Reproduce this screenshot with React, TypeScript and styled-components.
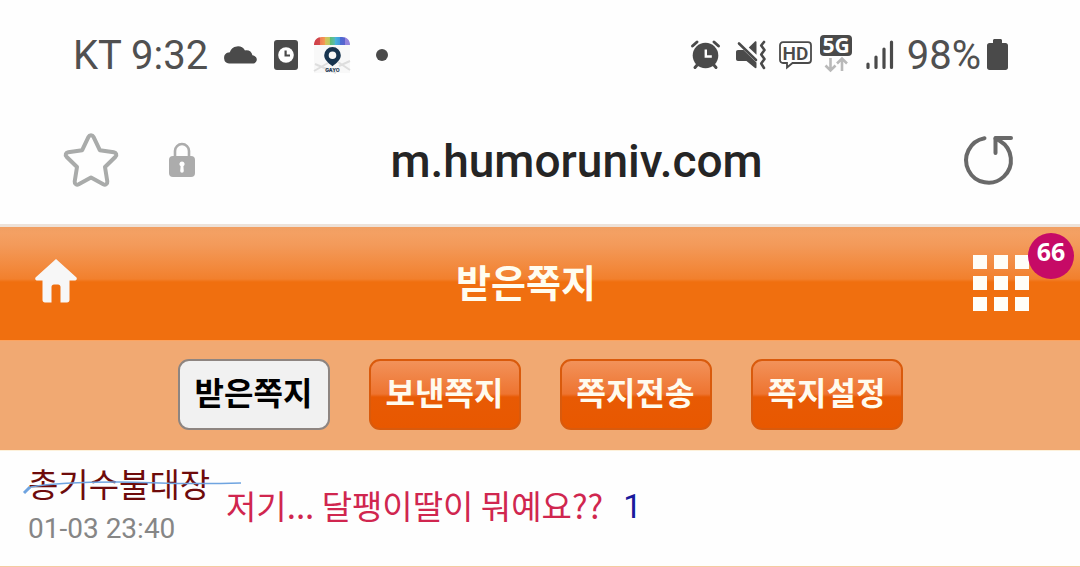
import React from "react";
import styled, { createGlobalStyle } from "styled-components";

const latin = `Roboto, "Noto Sans CJK KR", sans-serif`;
const korean = `"Noto Sans CJK KR", Roboto, sans-serif`;
const ink = "#4a4a4a";

const GlobalStyle = createGlobalStyle`
  *, *::before, *::after { box-sizing: border-box; }
  body { margin: 0; background: #fefefe; font-family: ${latin}; }
  button { padding: 0; border: 0; background: none; font: inherit; cursor: pointer; }
  svg { display: block; flex: none; overflow: visible; }
`;

const StatusBar = styled.div`
  display: flex;
  justify-content: space-between;
  align-items: center;
  height: 110px;
  padding: 0 72px 0 73px;
  color: #505050;
`;

const StatusGroup = styled.div<{ $gap: number }>`
  display: flex;
  align-items: center;
  gap: ${(p) => p.$gap}px;
`;

const StatusText = styled.span`
  padding-top: 1px;
  font-size: 40px;
  font-weight: 400;
  line-height: 48px;
  white-space: nowrap;
`;

const AddressBar = styled.form`
  display: flex;
  align-items: center;
  gap: 16px;
  height: 117px;
  padding: 0 66px 14px 64px;
  border-bottom: 3px solid #ede2d9;
`;

const IconButton = styled.button<{ $width: number; $align?: string }>`
  display: flex;
  flex: none;
  justify-content: ${(p) => p.$align || "flex-start"};
  width: ${(p) => p.$width}px;
`;

const AddressInput = styled.input`
  flex: 1;
  min-width: 0;
  padding: 2px 0 0;
  border: 0;
  outline: 0;
  background: transparent;
  color: #252525;
  font: 500 46px/56px ${latin};
  text-align: center;
`;

const PageHeader = styled.header`
  display: grid;
  grid-template-columns: 1fr auto 1fr;
  align-items: center;
  height: 113px;
  padding: 0 51px 2px 35px;
  background: linear-gradient(#f19f62 0, #f4a063 6px, #f39a5a 18px, #f2802d 52px, #f06f0f 55px);
`;

const PageTitle = styled.h1`
  margin: 0;
  padding: 0 12px 4px 0;
  color: #fffdf0;
  font: 700 38px/56px ${korean};
`;

const HomeLink = styled.a`
  justify-self: start;
  padding-bottom: 4px;
`;

const MenuButton = styled.button`
  position: relative;
  justify-self: end;
`;

const Badge = styled.span`
  position: absolute;
  top: -22px;
  right: -45px;
  width: 46px;
  height: 46px;
  border-radius: 50%;
  background: #c60a66;
  color: #fff;
  font: 700 25px/36px "Noto Sans", sans-serif;
  text-align: center;
`;

const Tabs = styled.nav`
  display: flex;
  justify-content: center;
  align-items: center;
  gap: 39px;
  height: 110px;
  padding-bottom: 2px;
  border-top: 1px solid #fda35e;
  background: #f1a972;
`;

const Tab = styled.button<{ $active?: boolean }>`
  && {
    width: 152px;
    height: 71px;
    padding-bottom: 8px;
    border: 2px solid ${(p) => (p.$active ? "#8e8581" : "#d95a0c")};
    border-radius: 11px;
    background: ${(p) =>
      p.$active
        ? "#f1f1f1"
        : "linear-gradient(#f2925a 0, #ee7430 33px, #e85a04 36px, #e85800 100%)"};
    color: ${(p) => (p.$active ? "#000" : "#fffbee")};
    font: 700 32px/48px ${korean};
    white-space: nowrap;
  }
`;

const MessageList = styled.ul`
  margin: 0;
  padding: 0;
  list-style: none;
`;

const MessageRow = styled.li`
  display: grid;
  grid-template-columns: 198px 1fr;
  align-items: center;
  height: 117px;
  padding: 0 0 8px 28px;
  border-top: 1px solid #fdf1da;
  border-bottom: 1px solid #f5cba0;
`;

const Sender = styled.div`
  position: relative;
  white-space: nowrap;
`;

const SenderName = styled.div`
  color: #6e0b0b;
  font: 400 33px/48px ${korean};
`;

const Sent = styled.time`
  display: block;
  color: #868686;
  font-size: 28px;
  line-height: 44px;
`;

const Stroke = styled.svg`
  position: absolute;
  top: 19px;
  left: -5px;
`;

const Subject = styled.div`
  display: flex;
  align-items: center;
  gap: 20px;
  color: #d0264f;
  font: 400 33px/48px ${korean};
`;

const SubjectLink = styled.a`
  color: inherit;
  text-decoration: none;
`;

const ReplyCount = styled.span`
  padding-top: 4px;
  color: #1a1a9c;
  font-family: ${latin};
`;

const CloudIcon = () => (
  <svg width="34" height="20" viewBox="0 0 34 20" fill={ink} aria-hidden="true">
    <path d="M5 18.500a5.600 5.600 0 0 1-1-10.900C5 7.400 5.400 7.400 5.800 7.200A8.400 8.400 0 0 1 21 5.400c3.800-.8 6.800 1.300 7.400 4.800 2.600.5 4.400 2 4.400 4.300s-1.800 4-4.300 4Z" />
  </svg>
);

const ClockCardIcon = () => (
  <svg width="24" height="30" viewBox="0 0 24 30" aria-hidden="true">
    <rect width="24" height="30" rx="3" fill={ink} />
    <circle cx="12" cy="15" r="7.800" fill="#fff" />
    <path d="M11.600 10.500v5h4.400" fill="none" stroke={ink} strokeWidth="2.200" />
  </svg>
);

const GayoIcon = () => (
  <svg width="36" height="36" viewBox="0 0 36 36" role="img" aria-label="GAYO">
    <defs>
      <linearGradient id="rainbow">
        <stop offset="0" stopColor="#cf3e48" />
        <stop offset=".16" stopColor="#d34a4c" />
        <stop offset=".17" stopColor="#f07a55" />
        <stop offset=".3" stopColor="#f39a52" />
        <stop offset=".31" stopColor="#d9c05a" />
        <stop offset=".43" stopColor="#b8cc62" />
        <stop offset=".44" stopColor="#62bd6c" />
        <stop offset=".57" stopColor="#56bcae" />
        <stop offset=".58" stopColor="#4bb6dc" />
        <stop offset=".72" stopColor="#3f9ade" />
        <stop offset=".73" stopColor="#4a6bd2" />
        <stop offset=".86" stopColor="#5860cc" />
        <stop offset=".87" stopColor="#9383dc" />
        <stop offset="1" stopColor="#9383dc" />
      </linearGradient>
    </defs>
    <path d="M0 8V36H36V8" fill="#f8f8f8" />
    <path d="M1 27 22 36M0 34 14 26M25 29 36 24M24 25 36 33" stroke="#dedede" strokeWidth="2" />
    <path d="M0 8C0 3 3 0 8 0H28c5 0 8 3 8 8Z" fill="url(#rainbow)" />
    <path
      fillRule="evenodd"
      d="M18.500 10a8.300 8.300 0 0 1 8.300 8.300c0 4.500-4.500 8-8.300 11-3.800-3-8.300-6.500-8.300-11A8.300 8.300 0 0 1 18.500 10Zm0 4.500a3.800 3.800 0 1 0 0 7.600 3.800 3.800 0 0 0 0-7.600Z"
      fill="#17344f"
    />
    <text x="18.500" y="34.500" textAnchor="middle" fontFamily="Inter, sans-serif" fontSize="5" fontWeight="800" fill="#17344f">
      GAYO
    </text>
  </svg>
);

const DotIcon = () => (
  <svg width="32" height="12" viewBox="0 0 32 12" aria-hidden="true">
    <circle cx="16" cy="6" r="6" fill={ink} />
  </svg>
);

const AlarmIcon = () => (
  <svg width="39" height="30" viewBox="0 0 39 30" aria-hidden="true">
    <circle cx="14.500" cy="15.500" r="12.800" fill={ink} />
    <path d="M1.500 6 6 2M27.500 6 23 2M4 27.500l3-3.500M25 27.500 22 24" stroke={ink} strokeWidth="3" strokeLinecap="round" />
    <path d="M14.800 9.500v7h6" fill="none" stroke="#fff" strokeWidth="2.400" />
  </svg>
);

const MuteIcon = () => (
  <svg width="37" height="30" viewBox="0 0 37 30" aria-hidden="true">
    <path d="M2 10H7.500L20.500 22.500V27c0 1.300-.8 1.600-1.800.8L10.500 21H2C.8 21 0 20.200 0 19v-7c0-1.200.8-2 2-2Z" fill={ink} />
    <path d="m12.800 7.600 5.900-5.800c1-.9 1.800-.4 1.800.8V14.800Z" fill={ink} />
    <path d="M3 3.500 20 20" stroke={ink} strokeWidth="2.600" strokeLinecap="round" />
    <path d="m28 2-2.800 3.500L28.500 10l-3.300 4.500 3.300 4.500-3.300 4.500L28 28" fill="none" stroke={ink} strokeWidth="2.600" strokeLinejoin="round" strokeLinecap="round" />
  </svg>
);

const HdIcon = () => (
  <svg width="35" height="28" viewBox="0 0 35 28" role="img" aria-label="HD">
    <path d="M4 1.200H29c1.800 0 3 1.200 3 3V19c0 1.800-1.200 3-3 3H13.500L8 26.500V22H4c-1.800 0-3-1.200-3-3V4.200c0-1.800 1.200-3 3-3Z" fill="none" stroke={ink} strokeWidth="1.800" />
    <text x="16.500" y="18.500" textAnchor="middle" fontFamily="Roboto, sans-serif" fontSize="19" fontWeight="600" fill={ink}>
      HD
    </text>
  </svg>
);

const FiveGIcon = () => (
  <svg width="34" height="40" viewBox="0 0 34 40" role="img" aria-label="5G">
    <rect width="32" height="21" rx="4" y="0" fill={ink} />
    <text x="16" y="18" textAnchor="middle" fontFamily="Open Sans, sans-serif" fontSize="21" fontWeight="700" fill="#fff">
      5G
    </text>
    <path d="M10.500 23v12M5.500 30.500l5 5 5-5M22 36V24M17 28.500l5-5 5 5" fill="none" stroke="#b9b9b9" strokeWidth="2.600" />
  </svg>
);

const SignalIcon = () => (
  <svg width="41" height="30" viewBox="0 0 41 30" aria-hidden="true">
    <path d="M8 24v3.500M16 17v10.500M24 9v18.500M31.500 2v25.500" stroke={ink} strokeWidth="3.200" strokeLinecap="round" />
  </svg>
);

const BatteryIcon = () => (
  <svg width="21" height="32" viewBox="0 0 21 32" aria-hidden="true">
    <path d="M6 1.500C6 .6 6.600 0 7.500 0h6c.9 0 1.500.6 1.500 1.500V4h3.500C20 4 21 5 21 6.500v22c0 1.500-1 2.500-2.500 2.500h-16C1 31 0 30 0 28.500v-22C0 5 1 4 2.500 4H6Z" fill={ink} />
  </svg>
);

const StarIcon = () => (
  <svg width="54" height="54" viewBox="0 0 54 54" aria-hidden="true">
    <path
      d="M24.500 3.800c1-2 4-2 5 0l6.300 13.400 14 2c2.400.4 3.300 2.800 1.700 4.500L41 34l2.300 14.500c.3 2.400-1.900 3.900-4 2.800L27 44.500l-12.300 6.800c-2.100 1.100-4.300-.4-4-2.800L13 34 2.500 23.700C.9 22 1.800 19.600 4.200 19.200l14-2Z"
      fill="none"
      stroke="#a9abaa"
      strokeWidth="4"
      strokeLinejoin="round"
    />
  </svg>
);

const LockIcon = () => (
  <svg width="26" height="36" viewBox="0 0 26 36" aria-hidden="true">
    <path d="M6 15V9a7 7 0 0 1 14 0v6" fill="none" stroke="#acacac" strokeWidth="2.600" />
    <rect y="14" width="26" height="21" rx="4" fill="#acacac" />
    <path d="M13 19.500a2.600 2.600 0 0 1 1.400 4.800l.4 4.700a1.800 1.800 0 0 1-3.600 0l.4-4.700A2.600 2.600 0 0 1 13 19.500Z" fill="#fff" />
  </svg>
);

const ReloadIcon = () => (
  <svg width="50" height="52" viewBox="0 0 50 52" fill="none" stroke="#696969" strokeWidth="4" strokeLinecap="round" aria-hidden="true">
    <path d="M20.500 4.200A22.400 22.400 0 1 0 36 7L31.500 4.500" />
    <path d="M31.500 19V4h15.500" strokeLinejoin="round" />
  </svg>
);

const HomeIcon = () => (
  <svg width="42" height="44" viewBox="0 0 42 44" aria-hidden="true">
    <path d="M21 0 41.500 18.500c.8 1.500 0 3-1.500 3H34.500V41c0 1.500-1 2.500-2.500 2.500H25.500V28c0-1.500-1-2.500-2.500-2.500H19c-1.500 0-2.500 1-2.500 2.500V43.500H10c-1.500 0-2.500-1-2.500-2.500V21.500H2c-1.500 0-2.300-1.500-1.500-3Z" fill="#f7f7f7" />
  </svg>
);

const GridIcon = () => (
  <svg width="56" height="56" viewBox="0 0 56 56" fill="#fffef8" aria-hidden="true">
    {[0, 21, 42].map((y) =>
      [0, 21, 42].map((x) => <rect key={`${x}-${y}`} x={x} y={y} width="14" height="14" />)
    )}
  </svg>
);

const tabs = ["받은쪽지", "보낸쪽지", "쪽지전송", "쪽지설정"];

export default function App() {
  return (
    <>
      <GlobalStyle />
      <StatusBar>
        <StatusGroup $gap={16}>
          <StatusText>KT 9:32</StatusText>
          <CloudIcon />
          <ClockCardIcon />
          <GayoIcon />
          <DotIcon />
        </StatusGroup>
        <StatusGroup $gap={6}>
          <AlarmIcon />
          <MuteIcon />
          <HdIcon />
          <FiveGIcon />
          <SignalIcon />
          <StatusText>98%</StatusText>
          <BatteryIcon />
        </StatusGroup>
      </StatusBar>

      <AddressBar onSubmit={(e) => e.preventDefault()}>
        <IconButton type="button" $width={89} aria-label="즐겨찾기">
          <StarIcon />
        </IconButton>
        <LockIcon />
        <AddressInput aria-label="주소" defaultValue="m.humoruniv.com" />
        <IconButton type="button" $width={56} $align="flex-end" aria-label="새로고침">
          <ReloadIcon />
        </IconButton>
      </AddressBar>

      <PageHeader>
        <HomeLink href="#" aria-label="홈">
          <HomeIcon />
        </HomeLink>
        <PageTitle>받은쪽지</PageTitle>
        <MenuButton type="button" aria-label="메뉴">
          <GridIcon />
          <Badge>66</Badge>
        </MenuButton>
      </PageHeader>

      <Tabs>
        {tabs.map((label, i) => (
          <Tab key={label} type="button" $active={i === 0}>
            {label}
          </Tab>
        ))}
      </Tabs>

      <MessageList>
        <MessageRow>
          <Sender>
            <SenderName>총기수불대장</SenderName>
            <Sent>01-03 23:40</Sent>
            <Stroke width="220" height="18" viewBox="0 0 220 18" fill="none" aria-hidden="true">
              <path d="M1 15 7 9" stroke="#6fa4e0" strokeWidth="3" />
              <path d="M2 14 8 9C30 5 60 4 95 4S150 7 218 5" stroke="#6fa4e0" strokeWidth="1.500" />
            </Stroke>
          </Sender>
          <Subject>
            <SubjectLink href="#">저기... 달팽이딸이 뭐예요??</SubjectLink>
            <ReplyCount>1</ReplyCount>
          </Subject>
        </MessageRow>
      </MessageList>
    </>
  );
}
